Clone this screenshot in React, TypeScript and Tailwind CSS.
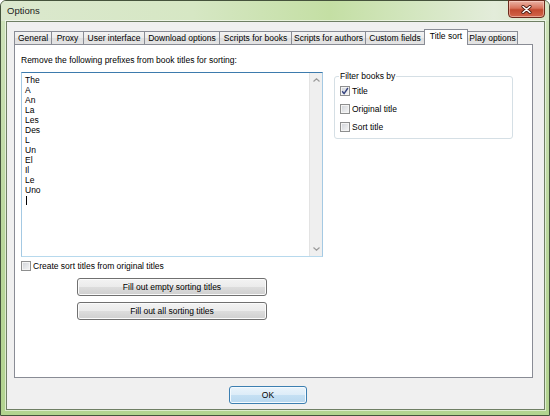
import type { ReactNode } from 'react'

const tabs = [
  { label: 'General', w: 'w-[38px]' },
  { label: 'Proxy', w: 'w-[33px]' },
  { label: 'User interface', w: 'w-[62px]' },
  { label: 'Download options', w: 'w-[76px]' },
  { label: 'Scripts for books', w: 'w-[73px]' },
  { label: 'Scripts for authors', w: 'w-[75px]' },
  { label: 'Custom fields', w: 'w-[60px]' },
  { label: 'Title sort', w: 'w-[44px]', active: true },
  { label: 'Play options', w: 'w-[51px]' },
]

const prefixes = ['The', 'A', 'An', 'La', 'Les', 'Des', 'L', 'Un', 'El', 'Il', 'Le', 'Uno']

function CheckBox({ checked }: { checked?: boolean }) {
  return (
    <span className="flex h-[10px] w-[10px] shrink-0 items-center justify-center border border-[#8e8f8f] bg-[linear-gradient(135deg,#cfd2d7,#f7f7f7)] shadow-[inset_0_0_0_1px_#f4f4f4]">
      {checked && (
        <svg width="8" height="8" viewBox="0 0 8 8">
          <path d="M1.2 4.2 L3.1 6.6 L6.9 1" fill="none" stroke="#34427e" strokeWidth="1.4" />
        </svg>
      )}
    </span>
  )
}

function WinButton({ children, className = '' }: { children: ReactNode; className?: string }) {
  return (
    <button
      type="button"
      className={`flex h-[18px] items-center justify-center rounded-[3px] border border-[#707070] bg-[linear-gradient(to_bottom,#f3f3f3_0%,#ebebeb_50%,#dddddd_50%,#cfcfcf_100%)] text-[8.5px] text-black shadow-[inset_0_0_0_1px_#fbfbfb] ${className}`}
    >
      {children}
    </button>
  )
}

export default function App() {
  return (
    <div className="flex h-[416px] w-[550px] flex-col rounded-t-[6px] border border-[#45533c] bg-[linear-gradient(to_bottom,#cfe3bb,#b9d79b_60%,#b3d490)] font-['Liberation_Sans',Arial,sans-serif] text-[8.5px] text-black">
      {/* title bar */}
      <div className="flex h-[20px] shrink-0 items-start justify-between rounded-t-[5px] bg-[linear-gradient(90deg,#dbe8ce,#d6e7c4_35%,#c4dfa4_60%,#d3e6bf_75%,#e3ecda_90%,#d5e5c5)] pl-[6px] pr-[4px]">
        <span className="mt-[4px] text-[9.5px] leading-[12px] text-[#1b1b1b]">Options</span>
        <div className="flex h-[18px] w-[37px] -mt-px items-center justify-center rounded-b-[4px] border border-[#6b2a1c] bg-[linear-gradient(to_bottom,#eab3a5,#d8735c_45%,#c24a30_55%,#d2654a)] shadow-[inset_0_0_0_1px_rgba(255,220,210,0.5)]">
          <svg width="11" height="9" viewBox="0 0 11 9">
            <path d="M2 1.5 L9 7.5 M9 1.5 L2 7.5" stroke="#4a1a10" strokeWidth="3.2" strokeLinecap="round" />
            <path d="M2 1.5 L9 7.5 M9 1.5 L2 7.5" stroke="#ffffff" strokeWidth="1.6" strokeLinecap="round" />
          </svg>
        </div>
      </div>

      {/* client area */}
      <div className="mb-[5px] ml-[5px] mr-[4px] flex h-[389px] flex-col border border-[#6f7f64] bg-[#f0f0f0] pl-[7px] pt-[7px] shadow-[0_0_0_1px_rgba(255,255,255,0.55)]">
        <div className="flex h-[15px] items-end">
          {tabs.map((t, i) =>
            t.active ? (
              <div
                key={t.label}
                className={`relative z-10 -mb-px flex h-[16px] ${t.w} ${i > 0 ? '-ml-px' : ''} items-center justify-center border border-b-0 border-[#898c95] bg-white pb-[2px] whitespace-nowrap`}
              >
                {t.label}
              </div>
            ) : (
              <div
                key={t.label}
                className={`flex h-[13px] ${t.w} ${i > 0 ? '-ml-px' : ''} items-center justify-center border border-b-0 border-[#898c95] bg-[linear-gradient(to_bottom,#f3f3f3,#ebebeb_50%,#dedede_50%,#e4e4e4)] whitespace-nowrap`}
              >
                {t.label}
              </div>
            ),
          )}
        </div>

        {/* tab page */}
        <div className="flex h-[334px] w-[519px] border border-[#898c95] bg-white pl-[6px] pt-[9px]">
          <div className="flex w-[302px] flex-col">
            <div className="mb-[6px] h-[12px] leading-[12px]">Remove the following prefixes from book titles for sorting:</div>
            <div className="flex h-[185px] border border-[#a4c9e3] border-t-[#3d7bad] border-b-[#b7d9ed]">
              <div className="flex-1 pl-[3px] pt-[2px] leading-[10px]">
                {prefixes.map((p) => (
                  <div key={p} className="h-[10px]">
                    {p}
                  </div>
                ))}
                <div className="flex h-[10px] items-center pl-[1px]">
                  <span className="h-[9px] w-px bg-black" />
                </div>
              </div>
              <div className="flex w-[13px] flex-col justify-between border-l border-[#e3e3e3] bg-[#efefef]">
                <div className="flex h-[14px] items-center justify-center">
                  <svg width="7" height="4" viewBox="0 0 7 4">
                    <path d="M0.5 3.5 L3.5 0.8 L6.5 3.5" fill="none" stroke="#9a9a9a" strokeWidth="1.2" />
                  </svg>
                </div>
                <div className="flex h-[14px] items-center justify-center">
                  <svg width="7" height="4" viewBox="0 0 7 4">
                    <path d="M0.5 0.5 L3.5 3.2 L6.5 0.5" fill="none" stroke="#9a9a9a" strokeWidth="1.2" />
                  </svg>
                </div>
              </div>
            </div>
            <label className="mt-[3px] flex h-[12px] items-center gap-[2px]">
              <CheckBox />
              Create sort titles from original titles
            </label>
            <WinButton className="mt-[6px] w-[190px] self-center">Fill out empty sorting titles</WinButton>
            <WinButton className="mt-[6px] w-[190px] self-center">Fill out all sorting titles</WinButton>
          </div>

          <fieldset className="ml-[11px] mt-[17px] w-[179px] self-start rounded-[3px] border border-[#d5dfe5] pb-[2px] pl-[5px]">
            <legend className="-ml-px px-px leading-[11px]">Filter books by</legend>
            {[
              { label: 'Title', checked: true },
              { label: 'Original title' },
              { label: 'Sort title' },
            ].map((c) => (
              <label key={c.label} className="flex h-[18px] items-center gap-[2px]">
                <CheckBox checked={c.checked} />
                {c.label}
              </label>
            ))}
          </fieldset>
        </div>

        <div className="mt-[8px] pl-[215px]">
          <button
            type="button"
            className="flex h-[18px] w-[78px] items-center justify-center rounded-[3px] border border-[#3c7fb1] bg-[linear-gradient(to_bottom,#eaf4fb_0%,#dcecf8_50%,#c5e0f3_50%,#b9d8ef_100%)] text-[8.5px] text-black shadow-[inset_0_0_0_1px_#f4fafe]"
          >
            OK
          </button>
        </div>
      </div>
    </div>
  )
}
